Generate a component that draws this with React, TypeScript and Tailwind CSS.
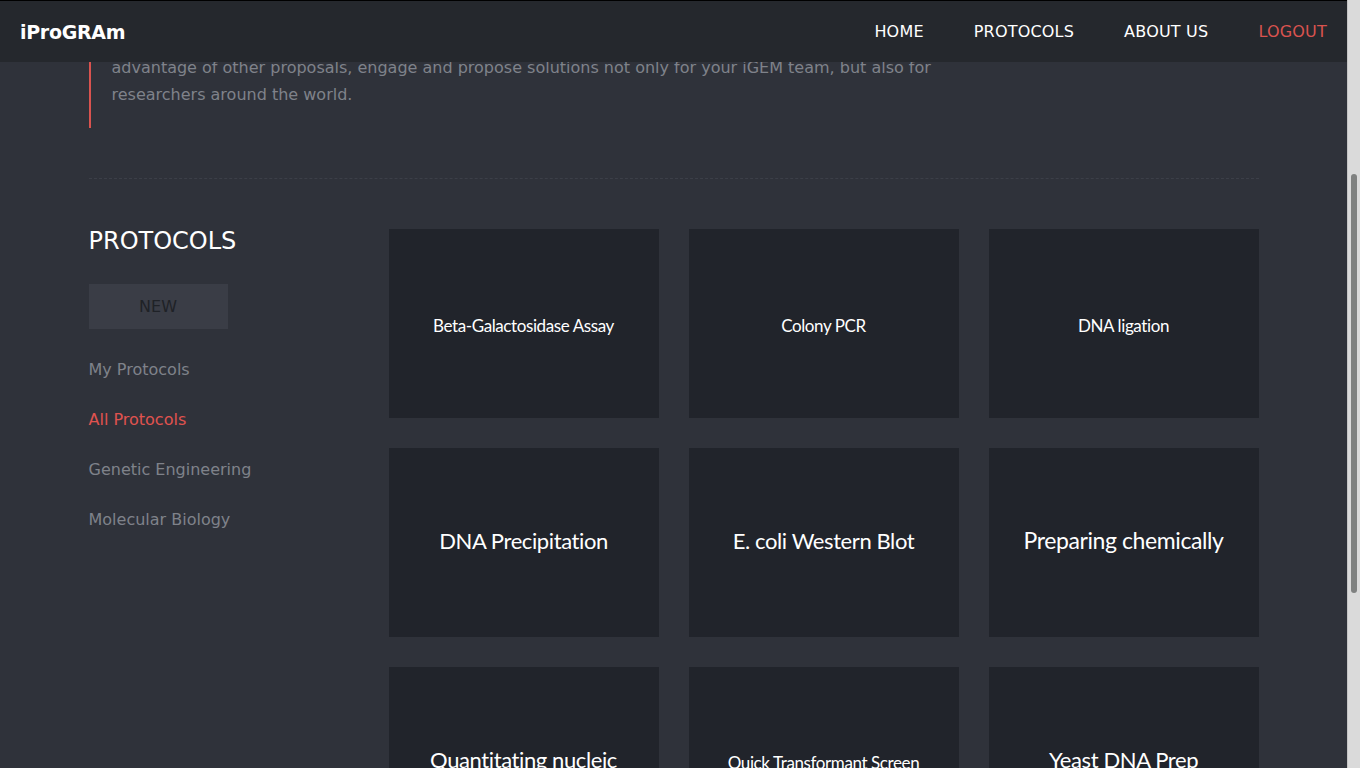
import { useLayoutEffect, useRef } from 'react';

const navLinks = ['HOME', 'PROTOCOLS', 'ABOUT US'];

const sideLinks = [
  { label: 'My Protocols', active: false },
  { label: 'All Protocols', active: true },
  { label: 'Genetic Engineering', active: false },
  { label: 'Molecular Biology', active: false },
];

const protocols = [
  { title: 'Beta-Galactosidase Assay', size: 'text-[17px] pt-[4px]' },
  { title: 'Colony PCR', size: 'text-[17px] pt-[4px]' },
  { title: 'DNA ligation', size: 'text-[17px] pt-[4px]' },
  { title: 'DNA Precipitation', size: 'text-[22px] pb-[5px]' },
  { title: 'E. coli Western Blot', size: 'text-[22px] pb-[5px]' },
  { title: 'Preparing chemically', size: 'text-[23px] pb-[5px]' },
  { title: 'Quantitating nucleic', size: 'text-[22px] pb-[5px]' },
  { title: 'Quick Transformant Screen', size: 'text-[17px] pt-[2px]' },
  { title: 'Yeast DNA Prep', size: 'text-[22px] pb-[5px]' },
  { title: 'Miniprep', size: 'text-[22px] pb-[5px]' },
  { title: 'Gel Electrophoresis', size: 'text-[22px] pb-[5px]' },
  { title: 'Restriction Digest', size: 'text-[22px] pb-[5px]' },
];

const App = () => {
  const dividerRef = useRef<HTMLDivElement>(null);

  useLayoutEffect(() => {
    // page is shown scrolled so the divider sits at y=178
    if (dividerRef.current) {
      window.scrollTo(0, dividerRef.current.offsetTop - 178);
    }
  }, []);

  return (
    <div className="min-h-screen bg-[#2f323a] pr-[13px] font-['DejaVu_Sans',sans-serif] text-white">
      <nav className="fixed top-0 left-0 right-[13px] z-10 h-[62px] bg-[#25282d] border-t border-black flex items-center justify-between pl-5 pr-5 pt-px">
        <span className="text-[19px] font-bold tracking-[-0.3px]">iProGRAm</span>
        <div className="flex items-center gap-[50px] text-[16px] tracking-[0.2px]">
          {navLinks.map((l) => (
            <a key={l} className="text-white">{l}</a>
          ))}
          <a className="text-[#d9534f]">LOGOUT</a>
        </div>
      </nav>

      {/* scrollbar */}
      <div className="fixed top-0 right-0 bottom-0 w-[13px] bg-[#dadada] border-l border-[#c4c4c4]">
        <div className="absolute left-[3px] top-[174px] w-[6px] h-[419px] rounded-[3px] bg-[#7f8180]" />
      </div>

      <div className="w-[1170px] mx-auto pt-[140px]">
        <h1 className="text-[36px] text-white mb-[30px]">Welcome to iProGRAm</h1>
        <div className="border-l-2 border-[#d9534f] pl-[21px] pt-[10px] pb-[20px] text-[16px] leading-[27px] text-[#7f828a]">
          <p>
            iProGRAm is an open place for iGEM teams to share, discuss and improve their laboratory
            <br />
            protocols. Browse the collection, upload your own methods, comment on others, take
            <br />
            advantage of other proposals, engage and propose solutions not only for your iGEM team, but also for
            <br />
            researchers around the world.
          </p>
        </div>

        <div ref={dividerRef} className="mt-[50px] border-t border-dashed border-[#3c3f48]" />

        <div className="flex pt-[50px] pb-[60px]">
          <aside className="w-[300px] shrink-0">
            <h2 className="text-[24px] leading-[24px] text-white">PROTOCOLS</h2>
            <button className="mt-[31px] w-[139px] h-[45px] bg-[#3a3d46] text-[16px] text-[#1f2227]">
              NEW
            </button>
            <ul className="mt-[16px]">
              {sideLinks.map((s) => (
                <li
                  key={s.label}
                  className={`text-[16px] leading-[50px] ${s.active ? 'text-[#e0534f]' : 'text-[#7f828a]'}`}
                >
                  {s.label}
                </li>
              ))}
            </ul>
          </aside>

          <div className="flex-1 grid grid-cols-3 gap-[30px]">
            {protocols.map((p) => (
              <div
                key={p.title}
                className="h-[189px] bg-[#21242b] flex items-center justify-center text-center font-['Lato',sans-serif]"
              >
                <span className={`${p.size} tracking-[-0.4px] text-white`}>{p.title}</span>
              </div>
            ))}
          </div>
        </div>
      </div>
    </div>
  );
};

export default App;
